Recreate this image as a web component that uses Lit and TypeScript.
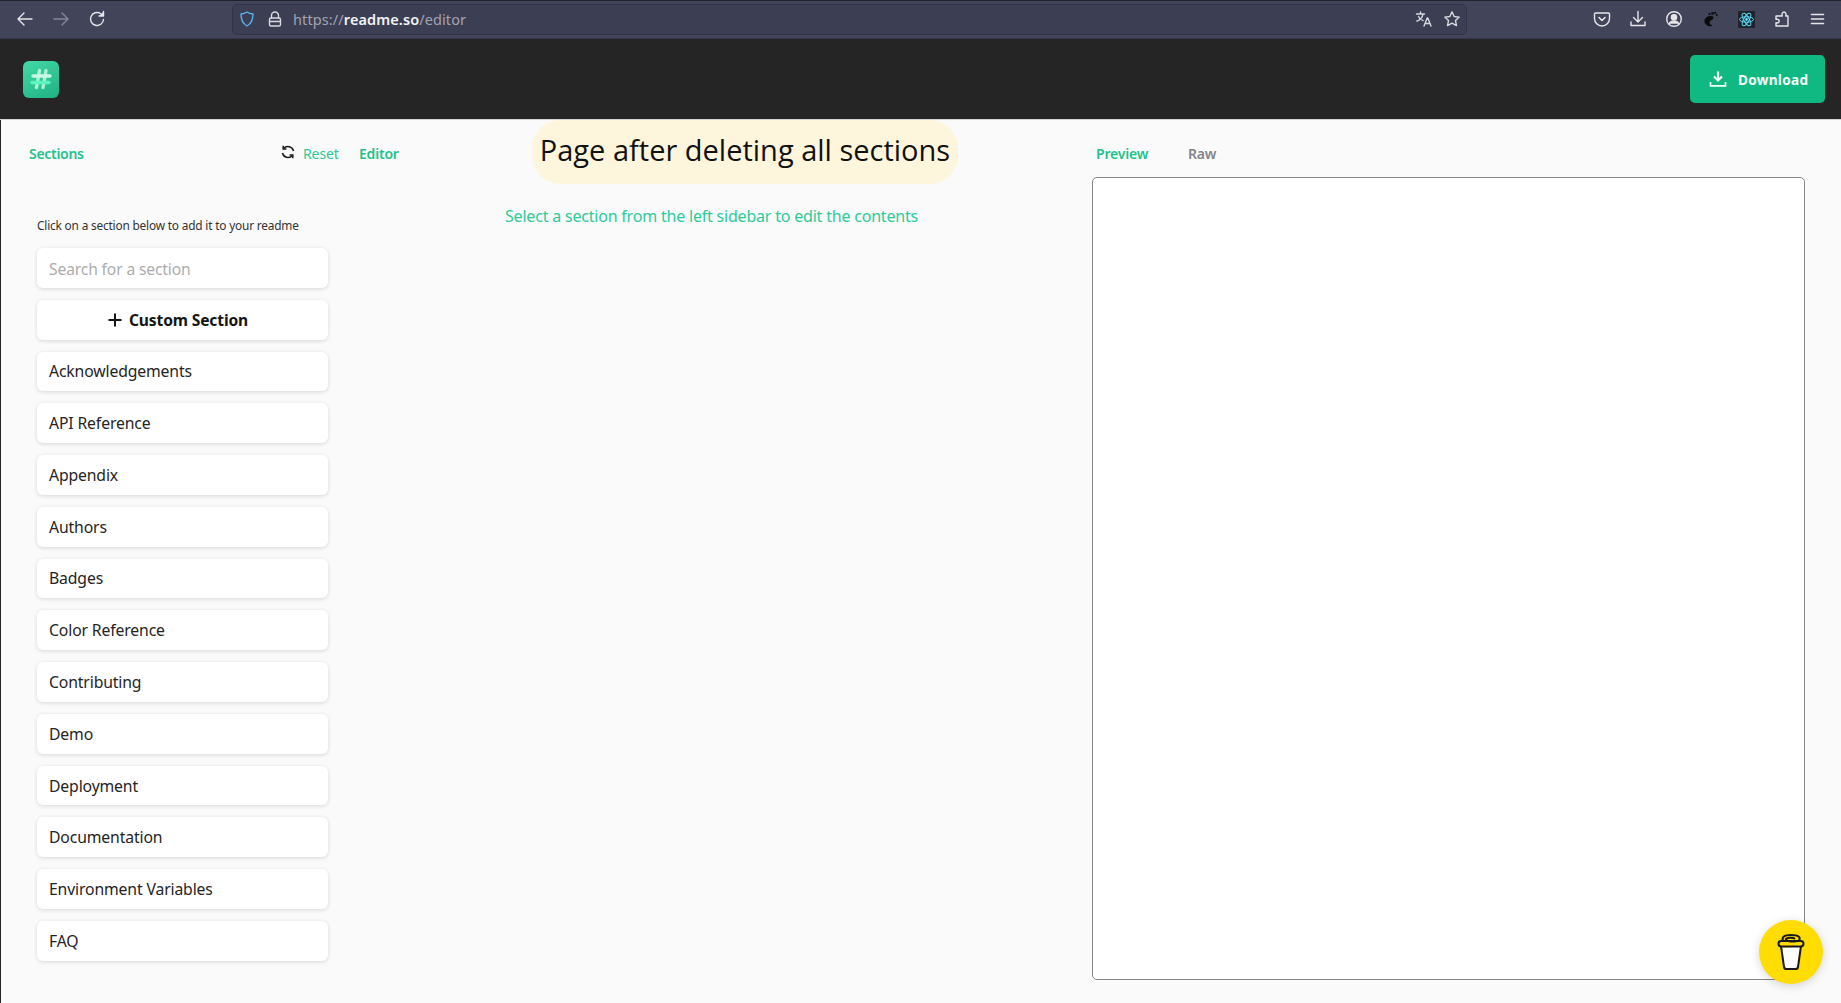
import { LitElement, html, css, svg } from "lit";
import { customElement } from "lit/decorators.js";

const SECTIONS = ["Acknowledgements","API Reference","Appendix","Authors","Badges","Color Reference","Contributing","Demo","Deployment","Documentation","Environment Variables","FAQ"];

const ic = (body: unknown, size = 18, vb = "0 0 18 18") => html`<svg width=${size} height=${size} viewBox=${vb} fill="none" stroke="currentColor" stroke-width="1.4" stroke-linecap="round" stroke-linejoin="round">${body}</svg>`;

@customElement("app-root")
export class AppRoot extends LitElement {
  static styles = css`
    :host { display: block; width: 1841px; height: 1003px; overflow: hidden; position: relative; background: #fafafa; font-family: "Noto Sans", sans-serif; }
    * { box-sizing: border-box; }
    .chrome { height: 39px; background: #42445a; border-top: 1px solid #23232b; border-bottom: 1px solid #35364a; display: flex; align-items: center; padding: 0 0 1px 7px; color: #e6e6ea; }
    .slot { width: 36px; height: 30px; display: flex; align-items: center; justify-content: center; flex: none; }
    .slot.dim { color: #85869a; }
    .url { margin: 0 117px; width: 1235px; height: 31px; flex: none; background: #3c3e53; border: 1px solid #33344a; border-radius: 5px; display: flex; align-items: center; font: 14.5px "Noto Sans", sans-serif; color: #a2a3b2; }
    .uslot { width: 28px; height: 28px; display: flex; align-items: center; justify-content: center; flex: none; color: #d8d8e0; }
    .uslot.first { color: #5cb3f0; }
    .utext { margin-left: 4px; flex: 1; letter-spacing: .1px; }
    .utext b { color: #f2f2f5; font-weight: 600; }
    .header { height: 81px; background: #252525; border-bottom: 1px solid #d4d4d4; display: flex; align-items: center; justify-content: space-between; padding: 0 16px 0 23px; }
    .logo { width: 36px; height: 37px; border-radius: 6px; background: linear-gradient(150deg, #45d9a6, #1fb184); display: flex; align-items: center; justify-content: center; }
    .dl { width: 135px; height: 48px; border-radius: 5px; background: #10b981; color: #f4fff9; display: flex; align-items: center; padding-left: 19px; gap: 11px; font-size: 13.6px; font-weight: 700; letter-spacing: .3px; }
    .main { height: 883px; display: grid; grid-template-columns: 504px 587px 1fr; border-left: 1px solid #252525; background: #fafafa; }
    .tabs { display: flex; align-items: center; height: 20px; margin-top: 24px; font-size: 14px; line-height: 20px; color: #1fc28c; }
    .side .tabs { padding-left: 28px; }
    .sections-tab { font-weight: 600; letter-spacing: -.3px; width: 252px; }
    .reset { display: flex; align-items: center; width: 78px; color: #2fc795; letter-spacing: -.1px; }
    .reset svg { color: #1c1c1c; margin-right: 8px; margin-top: -4px; }
    .editor-tab { font-weight: 600; letter-spacing: -.2px; }
    .hint { margin: 53px 0 15px 36px; font-size: 11.85px; line-height: 16px; color: #333; letter-spacing: -.18px; }
    .list { display: flex; flex-direction: column; gap: 12px; margin-left: 36px; width: 291px; }
    .card { height: 39.77px; background: #fff; border-radius: 6px; box-shadow: 0 1px 4px rgba(0,0,0,.14); padding-left: 12px; display: flex; align-items: center; font-size: 15.75px; color: #242424; letter-spacing: -.14px; flex: none; }
    .search { color: #a8a8a8; width: 100%; border: 0; outline: 0; padding: 2px 0 0; font: inherit; font-size: 15.65px; letter-spacing: -.14px; background: transparent; }
    .search::placeholder { color: #adadad; opacity: 1; }
    .custom { justify-content: center; padding: 0 10px 0 0; font-size: 15.6px; font-weight: 700; color: #151515; gap: 6px; }
    .msg { margin: 85px 0 0 0; font-size: 16px; line-height: 22px; color: #2ecb98; letter-spacing: -.2px; }
    .preview .tabs { padding-left: 4px; }
    .tab-p { font-weight: 600; width: 92px; letter-spacing: -.2px; }
    .tab-r { font-weight: 600; color: #85858d; letter-spacing: -.2px; }
    .box { margin-top: 13px; width: 713px; height: 803px; background: #fff; border: 1px solid #858585; border-radius: 5px; }
    .callout { position: absolute; left: 532px; top: 120px; width: 426px; height: 64px; border-radius: 28px; background: #fdf6dc; display: flex; align-items: center; justify-content: center; padding-bottom: 5px; font: 29px/1 "Open Sans", sans-serif; color: #111; white-space: nowrap; }
    .coffee { position: absolute; left: 1759px; top: 920px; width: 64px; height: 64px; border-radius: 50%; background: #fd0; box-shadow: 0 2px 10px rgba(0,0,0,.16); display: flex; align-items: center; justify-content: center; }
  `;

  render() {
    return html`
      <div class="chrome">
        <div class="slot">${ic(svg`<path d="M16 9H2M8 3 2 9l6 6"/>`)}</div>
        <div class="slot dim">${ic(svg`<path d="M2 9h14M10 3l6 6-6 6"/>`)}</div>
        <div class="slot">${ic(svg`<path d="M15.500 9.500A6.500 6.500 0 1 1 12.500 3.500"/><path d="M15.500 1.500v4.500H11" fill="currentColor"/>`)}</div>
        <div class="url">
          <div class="uslot first">${ic(svg`<path d="M9 2c2 1.300 4 1.800 6 2 0 5-1.500 9.500-6 12C4.500 13.500 3 9 3 4c2-.2 4-.7 6-2Z"/>`)}</div>
          <div class="uslot">${ic(svg`<rect x="3.500" y="8" width="11" height="8" rx="1.500"/><path d="M5.500 8V5.500a3.500 3.500 0 0 1 7 0V8M3.500 11.500h11"/>`)}</div>
          <div class="utext">https://<b>readme.so</b>/editor</div>
          <div class="uslot">${ic(svg`<path d="M1.500 4h8M5.500 2v2M8 4c-.5 3-3 6-6 7M3.500 6.500c1 2 3 3.500 4.500 4"/><path d="M9 16l3.200-8h.6L16 16M10 13.500h5"/>`)}</div>
          <div class="uslot">${ic(svg`<path d="m9 1.800 2.200 4.700 5 .6-3.700 3.500 1 5L9 13.100l-4.500 2.500 1-5L1.800 7.100l5-.6Z"/>`)}</div>
        </div>
        <div class="slot">${ic(svg`<path d="M2.500 3h13a1 1 0 0 1 1 1v4.500a7.500 7.500 0 0 1-15 0V4a1 1 0 0 1 1-1Z"/><path d="m6 7.500 3 3 3-3" stroke-width="1.600"/>`)}</div>
        <div class="slot">${ic(svg`<path d="M9 1.500V12M4.500 7.500 9 12l4.500-4.500M2 12v3.500h14V12"/>`)}</div>
        <div class="slot">${ic(svg`<circle cx="9" cy="9" r="7.300"/><circle cx="9" cy="7.200" r="2.600" fill="currentColor"/><path d="M4.200 13.800c1-2 3-2.800 4.800-2.800s3.800.8 4.800 2.800" fill="currentColor"/>`)}</div>
        <div class="slot">${ic(svg`<path d="M11 6.500C7 5.500 3.500 8 3.800 11.500 4 15 8.500 17 11 15.500 9 15 8 13.500 8.500 11.800c.5-1.500 2.500-2 3.500-3.300.7-1 0-1.700-1-2Z" fill="#0b0b0b" stroke="#0b0b0b" stroke-width=".6"/><circle cx="11.500" cy="3.400" r="1.300" fill="#0b0b0b" stroke="none"/><circle cx="14.200" cy="2.800" r="1.100" fill="#0b0b0b" stroke="none"/><circle cx="8.500" cy="4" r="1.100" fill="#0b0b0b" stroke="none"/><circle cx="15.800" cy="5" r="1" fill="#0b0b0b" stroke="none"/>`)}</div>
        <div class="slot"><svg width="17" height="17" viewBox="0 0 17 17"><rect width="17" height="17" rx="1" fill="#20232a"/><g fill="none" stroke="#61dafb" stroke-width="1"><ellipse cx="8.500" cy="8.500" rx="7" ry="2.700"/><ellipse cx="8.500" cy="8.500" rx="7" ry="2.700" transform="rotate(60 8.500 8.500)"/><ellipse cx="8.500" cy="8.500" rx="7" ry="2.700" transform="rotate(120 8.500 8.500)"/></g><circle cx="8.500" cy="8.500" r="1.400" fill="#61dafb"/></svg></div>
        <div class="slot">${ic(svg`<path d="M7 6H9.300C8.500 3.800 9.500 2 11 2S13.500 3.800 12.700 6H15v10H3v-3.200c2.200.6 3.200-.5 3.200-1.700S5.200 8.800 3 9.400V6Z"/>`)}</div>
        <div class="slot">${ic(svg`<path d="M2.500 4.500h12M2.500 9h12M2.500 13.500h12" stroke-width="1.600"/>`)}</div>
      </div>

      <header class="header">
        <div class="logo">
          <svg width="26" height="26" viewBox="0 0 26 26" fill="none" stroke-linecap="round" stroke-width="3.400">
            <path d="M11.500 4.500 8.500 21.500M18 4.500l-3 17" stroke="#a9f2d4"/>
            <path d="M5 10h17" stroke="#c8f9e4"/>
            <path d="M4 16.500h17" stroke="#5cf5bd"/>
          </svg>
        </div>
        <div class="dl">
          <svg width="18" height="18" viewBox="0 0 18 18" fill="none" stroke="currentColor" stroke-width="2"><path d="M9 1.500V10M5 6.500 9 10.500l4-4" stroke-width="2.200"/><path d="M1.500 12v3.800h15V12" stroke-width="1.700"/></svg>
          <span>Download</span>
        </div>
      </header>

      <main class="main">
        <section class="side">
          <div class="tabs">
            <span class="sections-tab">Sections</span>
            <span class="reset">
              <svg width="14" height="14" viewBox="0 0 14 14" fill="none" stroke="currentColor" stroke-width="1.500"><path d="M12.500 6A5.700 5.700 0 0 0 2.600 3.500"/><path d="M1.500 8a5.700 5.700 0 0 0 9.900 2.500"/><path d="M2.200 .8v3.200h3.200M11.800 13.200V10H8.600"/></svg>
              Reset
            </span>
            <span class="editor-tab">Editor</span>
          </div>
          <div class="hint">Click on a section below to add it to your readme</div>
          <div class="list">
            <div class="card"><input class="search" placeholder="Search for a section" /></div>
            <div class="card custom">
              <svg width="16" height="16" viewBox="0 0 16 16" stroke="#151515" stroke-width="2"><path d="M8 1.500v13M1.500 8h13"/></svg>
              Custom Section
            </div>
            ${SECTIONS.map((s) => html`<div class="card">${s}</div>`)}
          </div>
        </section>
        <section class="edit">
          <div class="msg">Select a section from the left sidebar to edit the contents</div>
        </section>
        <section class="preview">
          <div class="tabs">
            <span class="tab-p">Preview</span>
            <span class="tab-r">Raw</span>
          </div>
          <div class="box"></div>
        </section>
      </main>

      <div class="callout">Page after deleting all sections</div>
      <div class="coffee">
        <svg width="30" height="38" viewBox="0 0 30 38" fill="none" stroke="#1a1a1a" stroke-width="2" stroke-linejoin="round">
          <path d="M5.500 14 C12 16 16 13 24.500 12.500 L22 34 Q21.800 36 19.500 36 H10.500 Q8.200 36 8 34 Z" fill="#fff" stroke="none"/>
          <path d="M5 13 8 34Q8.300 36 10.500 36H19.500Q21.700 36 22 34L25 13"/>
          <rect x="2.500" y="8" width="25" height="5.500" rx="2.700"/>
          <path d="M7 8C5.500 4.500 7.500 2 15 2s10 2.200 8 5.500c-1 1-7 1.500-11 .5-3-1-3-2.500 0-3 3-.4 6 0 7 1"/>
        </svg>
      </div>
    `;
  }
}
